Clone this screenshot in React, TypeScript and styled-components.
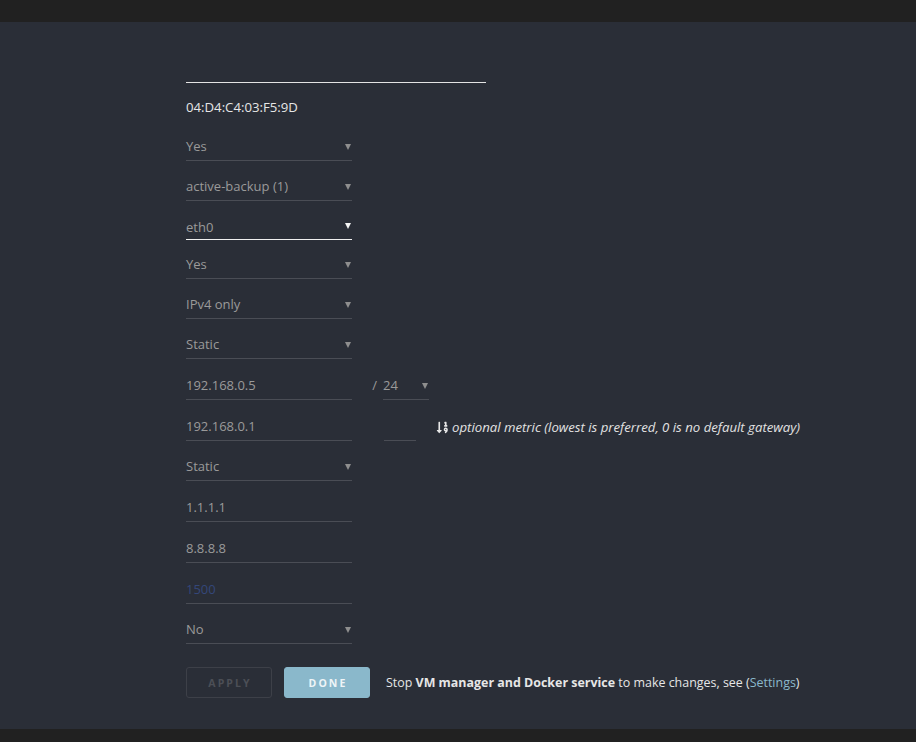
import React from "react";
import styled, { createGlobalStyle } from "styled-components";
import { FaSortNumericDown } from "react-icons/fa";

const Global = createGlobalStyle`
  html, body { margin: 0; padding: 0; background: #212121; }
  body { font-family: "Open Sans", "Noto Sans", sans-serif; }
`;

const Page = styled.div`
  display: flex;
  flex-direction: column;
  min-height: 742px;
`;

const TopBar = styled.div`
  height: 22px;
  background: #212121;
`;

const Content = styled.div`
  background: #2a2e37;
  padding: 60px 0 31px 186px;
  display: flex;
  flex-direction: column;
`;

const TopRule = styled.div`
  width: 300px;
  height: 1px;
  background: #e4e4e4;
`;

const MacRow = styled.div`
  margin-top: 14px;
  height: 20px;
  line-height: 20px;
  font-size: 13.2px;
  color: #e6e6e6;
`;

const Rows = styled.div`
  display: flex;
  flex-direction: column;
  margin-top: 4px;
`;

const Row = styled.div<{ $gap?: number }>`
  display: flex;
  align-items: flex-end;
  height: 28px;
  margin-top: ${(p) => p.$gap ?? 12}px;
`;

const Field = styled.div<{ $w: number; $focus?: boolean; $placeholder?: boolean }>`
  position: relative;
  box-sizing: border-box;
  width: ${(p) => p.$w}px;
  height: 28px;
  line-height: ${(p) => (p.$focus ? 24 : 27)}px;
  padding-top: ${(p) => (p.$focus ? 3 : 0)}px;
  border-bottom: 1px solid ${(p) => (p.$focus ? "#f0f0f0" : "#4a4d55")};
  font-size: 13px;
  color: ${(p) => (p.$placeholder ? "#34477a" : "#9a9a9a")};
  white-space: nowrap;
`;

const Arrow = styled.span<{ $focus?: boolean }>`
  position: absolute;
  right: 1px;
  top: 11px;
  width: 0;
  height: 0;
  border-left: 3px solid transparent;
  border-right: 3px solid transparent;
  border-top: 6px solid ${(p) => (p.$focus ? "#f4f4f4" : "#8e8e8e")};
`;

const Slash = styled.span`
  width: 31px;
  text-align: right;
  padding-right: 6px;
  box-sizing: border-box;
  line-height: 27px;
  height: 28px;
  font-size: 13px;
  color: #9a9a9a;
`;

const Spacer = styled.span<{ $w: number }>`
  width: ${(p) => p.$w}px;
  flex: none;
`;

const Hint = styled.span`
  display: flex;
  align-items: center;
  gap: 3px;
  height: 28px;
  margin-left: 20px;
  font-size: 13.2px;
  font-style: italic;
  color: #e2e2e2;
  white-space: nowrap;
`;

const Actions = styled.div`
  display: flex;
  align-items: center;
  margin-top: 23px;
  height: 31px;
`;

const Button = styled.button<{ $primary?: boolean }>`
  box-sizing: border-box;
  width: 86px;
  height: 31px;
  margin-right: ${(p) => (p.$primary ? 16 : 12)}px;
  border-radius: 3px;
  border: 1px solid ${(p) => (p.$primary ? "#8ab8cb" : "#3d4048")};
  background: ${(p) => (p.$primary ? "#8ab8cb" : "transparent")};
  color: ${(p) => (p.$primary ? "#eef4f7" : "#4c4f56")};
  font-family: "Open Sans", sans-serif;
  font-weight: 700;
  font-size: 10.5px;
  letter-spacing: 2.1px;
  text-transform: uppercase;
  padding: 0 0 0 2px;
`;

const Note = styled.span`
  font-size: 12.45px;
  color: #e6e6e6;
  white-space: nowrap;
  b { font-weight: 700; }
`;

const Link = styled.a`
  color: #8ab8cb;
  text-decoration: none;
`;

const BottomBar = styled.div`
  flex: 1;
  background: #212121;
`;

type SelProps = { value: string; w?: number; focus?: boolean };
const Select = ({ value, w = 166, focus }: SelProps) => (
  <Field $w={w} $focus={focus}>
    {value}
    <Arrow $focus={focus} />
  </Field>
);

export default function App() {
  return (
    <Page>
      <Global />
      <TopBar />
      <Content>
        <TopRule />
        <MacRow>04:D4:C4:03:F5:9D</MacRow>
        <Rows>
          <Row><Select value="Yes" /></Row>
          <Row><Select value="active-backup (1)" /></Row>
          <Row $gap={11}><Select value="eth0" focus /></Row>
          <Row $gap={11}><Select value="Yes" /></Row>
          <Row><Select value="IPv4 only" /></Row>
          <Row><Select value="Static" /></Row>
          <Row $gap={13}>
            <Field $w={166}>192.168.0.5</Field>
            <Slash>/</Slash>
            <Select value="24" w={46} />
          </Row>
          <Row $gap={13}>
            <Field $w={166}>192.168.0.1</Field>
            <Spacer $w={32} />
            <Field $w={32} />
            <Hint>
              <FaSortNumericDown size={13} color="#e8e8e8" />
              optional metric (lowest is preferred, 0 is no default gateway)
            </Hint>
          </Row>
          <Row><Select value="Static" /></Row>
          <Row $gap={13}><Field $w={166}>1.1.1.1</Field></Row>
          <Row $gap={13}><Field $w={166}>8.8.8.8</Field></Row>
          <Row $gap={13}><Field $w={166} $placeholder>1500</Field></Row>
          <Row><Select value="No" /></Row>
        </Rows>
        <Actions>
          <Button>Apply</Button>
          <Button $primary>Done</Button>
          <Note>
            Stop <b>VM manager and Docker service</b> to make changes, see (<Link href="#">Settings</Link>)
          </Note>
        </Actions>
      </Content>
      <BottomBar />
    </Page>
  );
}
